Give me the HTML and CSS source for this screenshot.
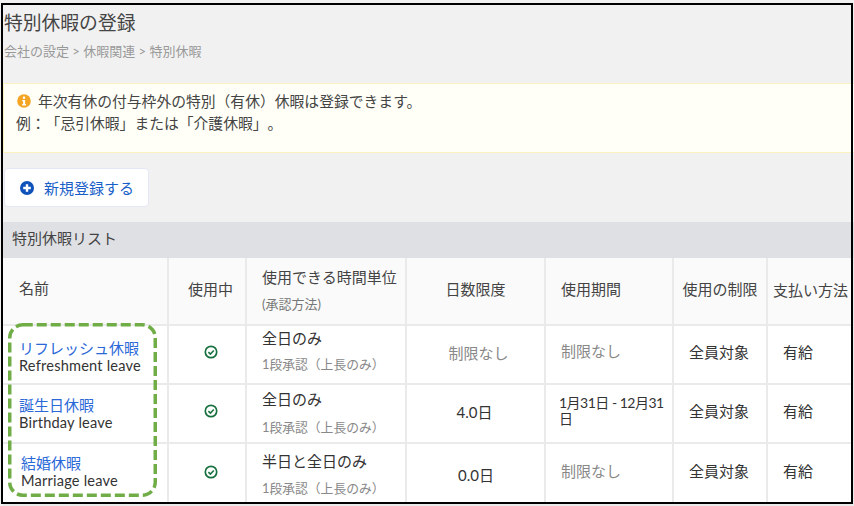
FILE: index.html
```html
<!DOCTYPE html>
<html lang="ja">
<head>
<meta charset="utf-8">
<title>特別休暇の登録</title>
<link rel="stylesheet" href="styles.css">
</head>
<body>
<main class="page">
  <header class="head">
    <h1 class="title">特別休暇の登録</h1>
    <p class="crumbs">会社の設定 &gt; 休暇関連 &gt; 特別休暇</p>
  </header>
  <section class="notice">
    <p class="notice-line">
      <svg class="info" viewBox="0 0 14 14" aria-hidden="true"><circle cx="7" cy="7" r="6.8" fill="#f5a524"/><rect x="5.9" y="2.6" width="2.2" height="2.2" fill="#fff"/><path d="M5.2 5.9h2.9v4.2h.9v1.3H5.2v-1.3h.9V7.2h-.9z" fill="#fff"/></svg>
      年次有休の付与枠外の特別（有休）休暇は登録できます。
    </p>
    <p class="notice-line">例：「忌引休暇」または「介護休暇」。</p>
  </section>
  <button class="add" type="button">
    <svg class="plus" viewBox="0 0 14 14" aria-hidden="true"><circle cx="7" cy="7" r="7" fill="#0f52ba"/><path d="M5.8 3.2h2.4v2.6h2.6v2.4H8.2v2.6H5.8V8.2H3.2V5.8h2.6z" fill="#fff"/></svg>
    新規登録する
  </button>
  <h2 class="list-title">特別休暇リスト</h2>
  <table class="list">
    <colgroup>
      <col class="c-name"><col class="c-active"><col class="c-unit"><col class="c-days"><col class="c-period"><col class="c-limit"><col class="c-pay">
    </colgroup>
    <thead>
      <tr>
        <th class="th-name">名前</th>
        <th class="center active">使用中</th>
        <th class="th-unit">使用できる時間単位<small class="sub-head">(承認方法)</small></th>
        <th class="center">日数限度</th>
        <th class="th-period">使用期間</th>
        <th class="center th-limit">使用の制限</th>
        <th class="th-pay">支払い方法</th>
      </tr>
    </thead>
    <tbody>
      <tr class="r1">
        <td class="name"><a class="link">リフレッシュ休暇</a><span class="en">Refreshment leave</span></td>
        <td class="center active"><svg class="check" viewBox="0 0 14 14" aria-hidden="true"><circle cx="7" cy="7" r="5.7" fill="none" stroke="#17703f" stroke-width="1.7"/><path d="M4.4 7.1l2 2 3.4-3.6" fill="none" stroke="#17703f" stroke-width="1.5"/></svg></td>
        <td class="unit">全日のみ<span class="approve">1段承認（上長のみ）</span></td>
        <td class="center muted low">制限なし</td>
        <td class="period muted">制限なし</td>
        <td class="center limit">全員対象</td>
        <td class="pay">有給</td>
      </tr>
      <tr class="r2">
        <td class="name"><a class="link">誕生日休暇</a><span class="en">Birthday leave</span></td>
        <td class="center active"><svg class="check" viewBox="0 0 14 14" aria-hidden="true"><circle cx="7" cy="7" r="5.7" fill="none" stroke="#17703f" stroke-width="1.7"/><path d="M4.4 7.1l2 2 3.4-3.6" fill="none" stroke="#17703f" stroke-width="1.5"/></svg></td>
        <td class="unit">全日のみ<span class="approve">1段承認（上長のみ）</span></td>
        <td class="center days-a">4.0日</td>
        <td class="period period-tight">1月31日 - 12月31<br>日</td>
        <td class="center limit">全員対象</td>
        <td class="pay">有給</td>
      </tr>
      <tr class="r3">
        <td class="name name-shift"><a class="link">結婚休暇</a><span class="en">Marriage leave</span></td>
        <td class="center active"><svg class="check" viewBox="0 0 14 14" aria-hidden="true"><circle cx="7" cy="7" r="5.7" fill="none" stroke="#17703f" stroke-width="1.7"/><path d="M4.4 7.1l2 2 3.4-3.6" fill="none" stroke="#17703f" stroke-width="1.5"/></svg></td>
        <td class="unit">半日と全日のみ<span class="approve">1段承認（上長のみ）</span></td>
        <td class="center low days-b">0.0日</td>
        <td class="period muted">制限なし</td>
        <td class="center limit">全員対象</td>
        <td class="pay">有給</td>
      </tr>
    </tbody>
  </table>
</main>
<div class="frame"></div>
<svg class="highlight" viewBox="0 0 149 174" aria-hidden="true"><rect x="1.75" y="1.75" width="145.5" height="170.5" rx="13" fill="none" stroke="#70ad47" stroke-width="3.5" stroke-dasharray="10 4"/></svg>
</body>
</html>
```
FILE: styles.css
```css
* { box-sizing: border-box; }
html, body { margin: 0; padding: 0; width: 854px; height: 506px; overflow: hidden; background: #fff; }
body { position: relative; font-family: "Lato", "Noto Sans CJK JP", sans-serif; color: #333; font-size: 15px; text-spacing-trim: space-all; }
.page { height: 506px; overflow: hidden; background: #f1f1f1; padding: 5px 0 0 3px; }
.head { height: 78px; padding-top: 6px; }
.title { margin: 0; font-weight: 400; font-size: 18.8px; line-height: 24px; color: #444; padding-left: 1px; }
.crumbs { margin: 7px 0 0; font-size: 13px; line-height: 18px; color: #999; padding-left: 1px; }
.notice { height: 70px; background: #fffff7; border-top: 1px solid #fbf0c0; border-bottom: 1px solid #fbf0c0; border-left: 1px solid #fbf0c0; padding: 6px 0 0 12px; }
.notice-line { margin: 0; font-size: 14.8px; line-height: 22px; color: #444; display: flex; align-items: center; gap: 7px; height: 22px; white-space: nowrap; }
.info { width: 14px; height: 14px; flex: none; margin-left: 1px; }
.add { display: flex; align-items: center; gap: 10px; margin: 15px 0 0 1px; width: 145px; height: 39px; padding: 0 0 0 15px; background: #fff; border: 1px solid #e4e8f4; border-radius: 4px; color: #1a5fc8; font: inherit; font-size: 15px; }
.plus { width: 14px; height: 14px; flex: none; }
.list-title { margin: 15px 0 0; height: 36px; background: #dfe0e4; font-weight: 400; font-size: 15px; line-height: 33px; color: #444; padding-left: 9px; }
.list { border-collapse: collapse; table-layout: fixed; width: 851px; background: #fff; }
.c-name { width: 165px; } .c-active { width: 78px; } .c-unit { width: 160px; } .c-days { width: 139px; }
.c-period { width: 128px; } .c-limit { width: 94px; } .c-pay { width: 87px; }
th, td { border: 2px solid #eaeaea; border-width: 0 2px 2px 0; padding: 0 0 5px; font-size: 15px; vertical-align: middle; text-align: left; font-weight: 400; }
thead th { height: 67px; background: #fafafa; color: #444; }
.r1 td { height: 59px; } .r2 td { height: 59px; } .r3 td { height: 62px; }
.center { text-align: center; }
.th-name { padding: 0 0 8px 16px; }
th.active, td.active { padding-left: 7px; }
.th-limit { white-space: nowrap; }
.th-unit { padding: 0 0 2px 15px; line-height: 22px; }
.sub-head { display: block; font-size: 13px; color: #777; line-height: 20px; margin-top: 6px; }
.th-period { padding-left: 15px; }
.th-pay { padding: 0 0 4px 5px; white-space: nowrap; overflow: hidden; }
.r1 .name { padding: 5px 0 0 16px; }
.r2 .name { padding: 0 0 0 16px; }
.name { line-height: 18px; }
.r3 .name-shift { padding: 0 0 4px 18px; }
.link { display: block; color: #2a68d8; font-size: 15px; }
.en { display: block; font-size: 14.6px; color: #333; letter-spacing: .2px; }
.check { width: 14px; height: 14px; display: block; margin: 0 auto; }
.unit { padding: 0 0 3px 15px; line-height: 22px; color: #333; }
.r1 .unit { padding-bottom: 7px; }
.r2 .unit { padding-bottom: 1px; }
.r2 .approve { margin-top: 6px; }
.r3 .unit { padding-bottom: 0; }
.r3 .approve { margin-top: 5px; }
.approve { display: block; font-size: 12.8px; color: #888; margin-top: 4px; line-height: 22px; }
.muted { color: #888; }
td.low { padding: 0 0 5px 6px; }
.period { padding: 0 4px 9px 15px; }
.r3 .period { padding-bottom: 7px; }
.r2 .period-tight { padding: 0 0 5px 13px; line-height: 16px; font-size: 14px; letter-spacing: -.5px; white-space: nowrap; }
.days-a { padding-right: 2px; }
td.days-b { padding: 0 0 0 1px; }
td.limit { padding: 0 2px 7px 0; }
.pay { padding: 0 0 7px 15px; }
.frame { position: absolute; left: 1px; top: 3px; width: 852px; height: 501px; border: 2px solid #000; pointer-events: none; }
.highlight { position: absolute; left: 8px; top: 323px; width: 149px; height: 174px; pointer-events: none; }
```
